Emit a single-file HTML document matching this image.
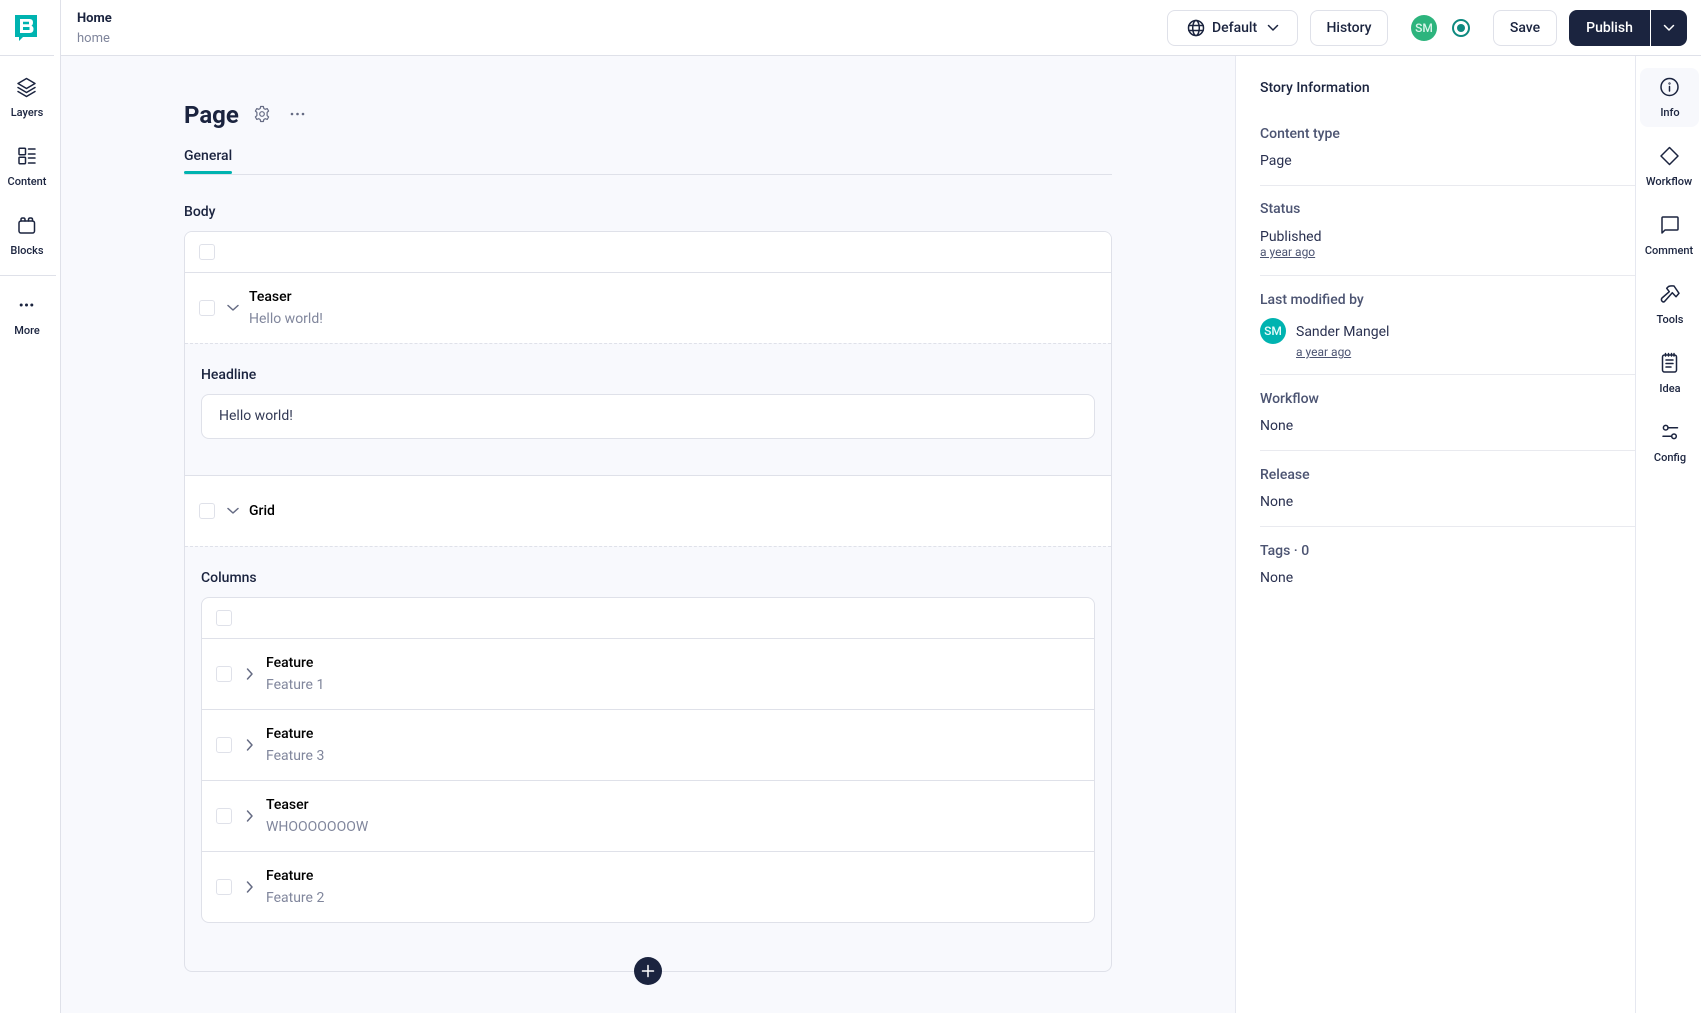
<!DOCTYPE html>
<html lang="en"><head><meta charset="utf-8"><title>Home</title>
<style>
*{box-sizing:border-box}
html,body{margin:0;padding:0;width:1701px;height:1013px;overflow:hidden;background:#fff}
body{font-family:"Roboto","Liberation Sans",sans-serif;color:#1b243f;position:relative}
.a{position:absolute}
.t{position:absolute;white-space:nowrap;line-height:20px;height:20px;font-size:14px;margin-top:1px}
.m{font-weight:500}
.b{font-weight:700}
.g{color:#80869c}
.l{color:#4c5472}
.nav{position:absolute;width:60px;text-align:center;font-size:11px;line-height:14px;height:14px;white-space:nowrap;font-weight:500;margin-top:1px}
.hl{position:absolute;height:1px;background:#dfe1e9}
.cb{position:absolute;width:16px;height:16px;border:1px solid #dfe1e9;border-radius:3px;background:#fff}
.btn{position:absolute;top:10px;height:36px;border:1px solid #dfe1e9;border-radius:8px;background:#fff;font-size:14px;font-weight:500;text-align:center;line-height:34px}
svg{position:absolute;overflow:visible;fill:none;stroke:#1b243f;stroke-width:1.5;stroke-linecap:round;stroke-linejoin:round}
.ch{stroke:#656b83;stroke-width:1.5}
.sm{font-size:12px;text-decoration:underline;color:#4c5472;position:absolute;white-space:nowrap;line-height:16px}
.v{color:#2a3150}
</style></head><body>

<!-- main backgrounds -->
<div class="a" style="left:61px;top:56px;width:1174px;height:957px;background:#f8f9fd"></div>
<div class="a" style="left:60px;top:0;width:1px;height:1013px;background:#dfe1e9"></div>
<div class="hl" style="left:61px;top:55px;width:1640px"></div>
<div class="hl" style="left:0;top:55px;width:54px"></div>
<div class="hl" style="left:0;top:275px;width:56px"></div>
<div class="a" style="left:1235px;top:56px;width:1px;height:957px;background:#e6e8f0"></div>
<div class="a" style="left:1635px;top:56px;width:1px;height:957px;background:#e6e8f0"></div>

<!-- logo -->
<svg style="left:15px;top:15px;stroke:none" width="22" height="27" viewBox="0 0 22 27">
<path fill="#00b3b0" d="M0 0H22V22H8L4 26V22H0Z"/>
<path fill="#fff" d="M5 4H14.500Q18 4 18 7.500Q18 9.800 16.500 10.700Q18.500 11.500 18.500 14Q18.500 18 14.500 18H5Z"/>
<path fill="#00b3b0" d="M8 6.800H14V9.300H8ZM8 12H14.500V15H8Z"/>
</svg>

<!-- left nav -->
<svg style="left:15px;top:76px" width="23" height="23" viewBox="0 0 23 23"><path d="M11.500 2.500L20 7.500L11.500 12.500L3 7.500Z"/><path d="M3 11.500L11.500 16.500L20 11.500"/><path d="M3 15.500L11.500 20.500L20 15.500"/></svg>
<div class="nav" style="left:-3px;top:105px">Layers</div>
<svg style="left:15px;top:145px" width="23" height="23" viewBox="0 0 23 23"><rect x="4" y="3.200" width="6.500" height="6.500" rx=".8"/><rect x="4" y="12.200" width="6.500" height="6.500" rx=".8"/><path d="M13.500 4H20M13.500 9H20M13.500 13H20M13.500 18H20"/></svg>
<div class="nav" style="left:-3px;top:174px">Content</div>
<svg style="left:15px;top:214px" width="23" height="23" viewBox="0 0 23 23"><rect x="4" y="7" width="15.500" height="12" rx="2"/><path d="M6 7V5.500Q6 4 7.500 4H8.500Q10 4 10 5.500V7M13.500 7V5.500Q13.500 4 15 4H16Q17.500 4 17.500 5.500V7"/></svg>
<div class="nav" style="left:-3px;top:243px">Blocks</div>
<svg style="left:15px;top:294px;fill:#1b243f;stroke:none" width="23" height="23" viewBox="0 0 23 23"><circle cx="6.200" cy="11" r="1.500"/><circle cx="11.500" cy="11" r="1.500"/><circle cx="16.800" cy="11" r="1.500"/></svg>
<div class="nav" style="left:-3px;top:323px">More</div>

<!-- header -->
<div class="t b" style="left:77px;top:8px;font-size:13px">Home</div>
<div class="t g" style="left:77px;top:28px;font-size:13px">home</div>

<div class="btn" style="left:1167px;width:131px"></div>
<svg style="left:1187px;top:19px" width="18" height="18" viewBox="0 0 18 18"><circle cx="9" cy="9" r="7.500"/><ellipse cx="9" cy="9" rx="3.300" ry="7.500"/><path d="M1.800 6.500H16.200M1.800 11.500H16.200"/></svg>
<div class="t m" style="left:1212px;top:17px">Default</div>
<svg style="left:1267px;top:24px" width="12" height="8" viewBox="0 0 12 8"><path d="M1.500 1.500L6 6L10.500 1.500"/></svg>
<div class="btn" style="left:1310px;width:78px">History</div>
<div class="a" style="left:1411px;top:15px;width:26px;height:26px;border-radius:50%;background:#2db47d;color:#d8f5e9;font-size:12px;font-weight:500;text-align:center;line-height:27px">SM</div>
<div class="a" style="left:1452px;top:19px;width:18px;height:18px;border-radius:50%;border:2px solid #0e8a80"></div>
<div class="a" style="left:1457px;top:24px;width:8px;height:8px;border-radius:50%;background:#0e8a80"></div>
<div class="btn" style="left:1493px;width:64px">Save</div>
<div class="a" style="left:1569px;top:10px;width:81px;height:36px;border-radius:8px 0 0 8px;background:#1b243f;color:#fff;font-size:14px;font-weight:500;text-align:center;line-height:36px">Publish</div>
<div class="a" style="left:1651px;top:10px;width:36px;height:36px;border-radius:0 8px 8px 0;background:#1b243f"></div>
<svg style="left:1663px;top:24px;stroke:#fff" width="12" height="8" viewBox="0 0 12 8"><path d="M1.500 1.500L6 6L10.500 1.500"/></svg>

<!-- title -->
<div class="t b" style="left:184px;top:100px;font-size:24px;line-height:30px;height:30px;margin-top:0">Page</div>
<svg style="left:253px;top:105px;stroke:#656b83;stroke-width:1.200" width="18" height="18" viewBox="0 0 18 18"><circle cx="9" cy="9" r="2.300"/><path d="M7.600 1.500H10.400L10.800 3.500L12.300 4.300L14.200 3.600L15.600 6L14.100 7.400V9V10.600L15.600 12L14.200 14.400L12.300 13.700L10.800 14.500L10.400 16.500H7.600L7.200 14.500L5.700 13.700L3.800 14.400L2.400 12L3.900 10.600V7.400L2.400 6L3.800 3.600L5.700 4.300L7.200 3.500Z"/></svg>
<svg style="left:290px;top:112px;fill:#656b83;stroke:none" width="15" height="4" viewBox="0 0 15 4"><circle cx="2" cy="2" r="1.300"/><circle cx="7.500" cy="2" r="1.300"/><circle cx="13" cy="2" r="1.300"/></svg>
<div class="t m" style="left:184px;top:145px">General</div>
<div class="hl" style="left:184px;top:174px;width:928px"></div>
<div class="a" style="left:184px;top:171px;width:48px;height:3px;border-radius:2px;background:#00b3b0"></div>
<div class="t m" style="left:184px;top:201px">Body</div>

<!-- outer box -->
<div class="a" style="left:184px;top:231px;width:928px;height:741px;border:1px solid #dfe1e9;border-radius:8px"></div>
<div class="a" style="left:185px;top:232px;width:926px;height:111px;background:#fff;border-radius:7px 7px 0 0"></div>
<div class="hl" style="left:185px;top:272px;width:926px"></div>
<div class="a" style="left:185px;top:343px;width:926px;border-top:1px dashed #dfe1e9"></div>
<div class="cb" style="left:199px;top:244px"></div>
<div class="cb" style="left:199px;top:300px"></div>
<svg class="ch" style="left:227px;top:304px" width="12" height="8" viewBox="0 0 12 8"><path d="M1 1.500L6 6L11 1.500"/></svg>
<div class="t m" style="left:249px;top:286px;color:#000">Teaser</div>
<div class="t g" style="left:249px;top:308px">Hello world!</div>

<div class="t m" style="left:201px;top:364px">Headline</div>
<div class="a" style="left:201px;top:394px;width:894px;height:45px;border:1px solid #dfe1e9;border-radius:8px;background:#fff"></div>
<div class="t" style="left:219px;top:405px;color:#333a55">Hello world!</div>

<div class="hl" style="left:185px;top:475px;width:926px"></div>
<div class="a" style="left:185px;top:476px;width:926px;height:70px;background:#fff"></div>
<div class="a" style="left:185px;top:546px;width:926px;border-top:1px dashed #dfe1e9"></div>
<div class="cb" style="left:199px;top:503px"></div>
<svg class="ch" style="left:227px;top:507px" width="12" height="8" viewBox="0 0 12 8"><path d="M1 1.500L6 6L11 1.500"/></svg>
<div class="t m" style="left:249px;top:500px;color:#000">Grid</div>

<div class="t m" style="left:201px;top:567px">Columns</div>

<!-- inner box -->
<div class="a" style="left:201px;top:597px;width:894px;height:326px;border:1px solid #dfe1e9;border-radius:8px;background:#fff"></div>
<div class="hl" style="left:202px;top:638px;width:892px"></div>
<div class="hl" style="left:202px;top:709px;width:892px"></div>
<div class="hl" style="left:202px;top:780px;width:892px"></div>
<div class="hl" style="left:202px;top:851px;width:892px"></div>
<div class="cb" style="left:216px;top:610px"></div>

<div class="cb" style="left:216px;top:666px"></div>
<svg class="ch" style="left:246px;top:668px" width="8" height="12" viewBox="0 0 8 12"><path d="M1.500 1L6 6L1.500 11"/></svg>
<div class="t m" style="left:266px;top:652px;color:#000">Feature</div>
<div class="t g" style="left:266px;top:674px">Feature 1</div>

<div class="cb" style="left:216px;top:737px"></div>
<svg class="ch" style="left:246px;top:739px" width="8" height="12" viewBox="0 0 8 12"><path d="M1.500 1L6 6L1.500 11"/></svg>
<div class="t m" style="left:266px;top:723px;color:#000">Feature</div>
<div class="t g" style="left:266px;top:745px">Feature 3</div>

<div class="cb" style="left:216px;top:808px"></div>
<svg class="ch" style="left:246px;top:810px" width="8" height="12" viewBox="0 0 8 12"><path d="M1.500 1L6 6L1.500 11"/></svg>
<div class="t m" style="left:266px;top:794px;color:#000">Teaser</div>
<div class="t g" style="left:266px;top:816px">WHOOOOOOOW</div>

<div class="cb" style="left:216px;top:879px"></div>
<svg class="ch" style="left:246px;top:881px" width="8" height="12" viewBox="0 0 8 12"><path d="M1.500 1L6 6L1.500 11"/></svg>
<div class="t m" style="left:266px;top:865px;color:#000">Feature</div>
<div class="t g" style="left:266px;top:887px">Feature 2</div>

<div class="a" style="left:634px;top:957px;width:28px;height:28px;border-radius:50%;background:#1b243f"></div>
<svg style="left:641px;top:964px;stroke:#fff" width="14" height="14" viewBox="0 0 14 14"><path d="M7 1.500V12.500M1.500 7H12.500"/></svg>

<!-- story info -->
<div class="t m" style="left:1260px;top:77px">Story Information</div>
<div class="t l m" style="left:1260px;top:123px">Content type</div>
<div class="t v" style="left:1260px;top:150px">Page</div>
<div class="hl" style="left:1260px;top:185px;width:375px;background:#e9eaef"></div>
<div class="t l m" style="left:1260px;top:198px">Status</div>
<div class="t v" style="left:1260px;top:226px">Published</div>
<div class="sm" style="left:1260px;top:244px">a year ago</div>
<div class="hl" style="left:1260px;top:275px;width:375px;background:#e9eaef"></div>
<div class="t l m" style="left:1260px;top:289px">Last modified by</div>
<div class="a" style="left:1260px;top:318px;width:26px;height:26px;border-radius:50%;background:#00b3b0;color:#e5fbfa;font-size:12px;font-weight:500;text-align:center;line-height:27px">SM</div>
<div class="t v" style="left:1296px;top:321px">Sander Mangel</div>
<div class="sm" style="left:1296px;top:344px">a year ago</div>
<div class="hl" style="left:1260px;top:374px;width:375px;background:#e9eaef"></div>
<div class="t l m" style="left:1260px;top:388px">Workflow</div>
<div class="t v" style="left:1260px;top:415px">None</div>
<div class="hl" style="left:1260px;top:450px;width:375px;background:#e9eaef"></div>
<div class="t l m" style="left:1260px;top:464px">Release</div>
<div class="t v" style="left:1260px;top:491px">None</div>
<div class="hl" style="left:1260px;top:526px;width:375px;background:#e9eaef"></div>
<div class="t l m" style="left:1260px;top:540px">Tags · 0</div>
<div class="t v" style="left:1260px;top:567px">None</div>

<!-- right rail -->
<div class="a" style="left:1640px;top:68px;width:59px;height:59px;border-radius:8px;background:#f7f8fc"></div>
<svg style="left:1658px;top:75px" width="23" height="23" viewBox="0 0 23 23"><circle cx="11.500" cy="12" r="8.500"/><path d="M11.500 11.500V16"/><circle cx="11.500" cy="8.500" r=".4"/></svg>
<div class="nav" style="left:1640px;top:105px">Info</div>
<svg style="left:1658px;top:144px" width="23" height="23" viewBox="0 0 23 23"><path d="M11.500 3.500L20 12L11.500 20.500L3 12Z"/></svg>
<div class="nav" style="left:1639px;top:174px">Workflow</div>
<svg style="left:1658px;top:213px" width="23" height="23" viewBox="0 0 23 23"><path d="M4 20V5Q4 4 5 4H19Q20 4 20 5V16Q20 17 19 17H7Z"/></svg>
<div class="nav" style="left:1639px;top:243px">Comment</div>
<svg style="left:1658px;top:282px" width="23" height="23" viewBox="0 0 23 23"><path d="M8.700 6.300L10.500 4.500Q13 3.500 16 4L21 11.300L18 14.700L14.300 10.700L6.300 19.700Q5 20.500 3.700 18.800Q3 17 4 16L11.300 9.700Z"/></svg>
<div class="nav" style="left:1640px;top:312px">Tools</div>
<svg style="left:1658px;top:351px" width="23" height="23" viewBox="0 0 23 23"><rect x="4.500" y="4" width="14" height="17" rx="2"/><path d="M7.500 2.500V5M10.500 2.500V5M13.500 2.500V5M16 2.500V5M8 9H15M8 12.500H15M8 16H13"/></svg>
<div class="nav" style="left:1640px;top:381px">Idea</div>
<svg style="left:1658px;top:420px" width="23" height="23" viewBox="0 0 23 23"><circle cx="7.700" cy="7.700" r="2.300"/><path d="M10 7.700H19.500M5 16.300H13.700"/><circle cx="16" cy="16.300" r="2.300"/></svg>
<div class="nav" style="left:1640px;top:450px">Config</div>

</body></html>
